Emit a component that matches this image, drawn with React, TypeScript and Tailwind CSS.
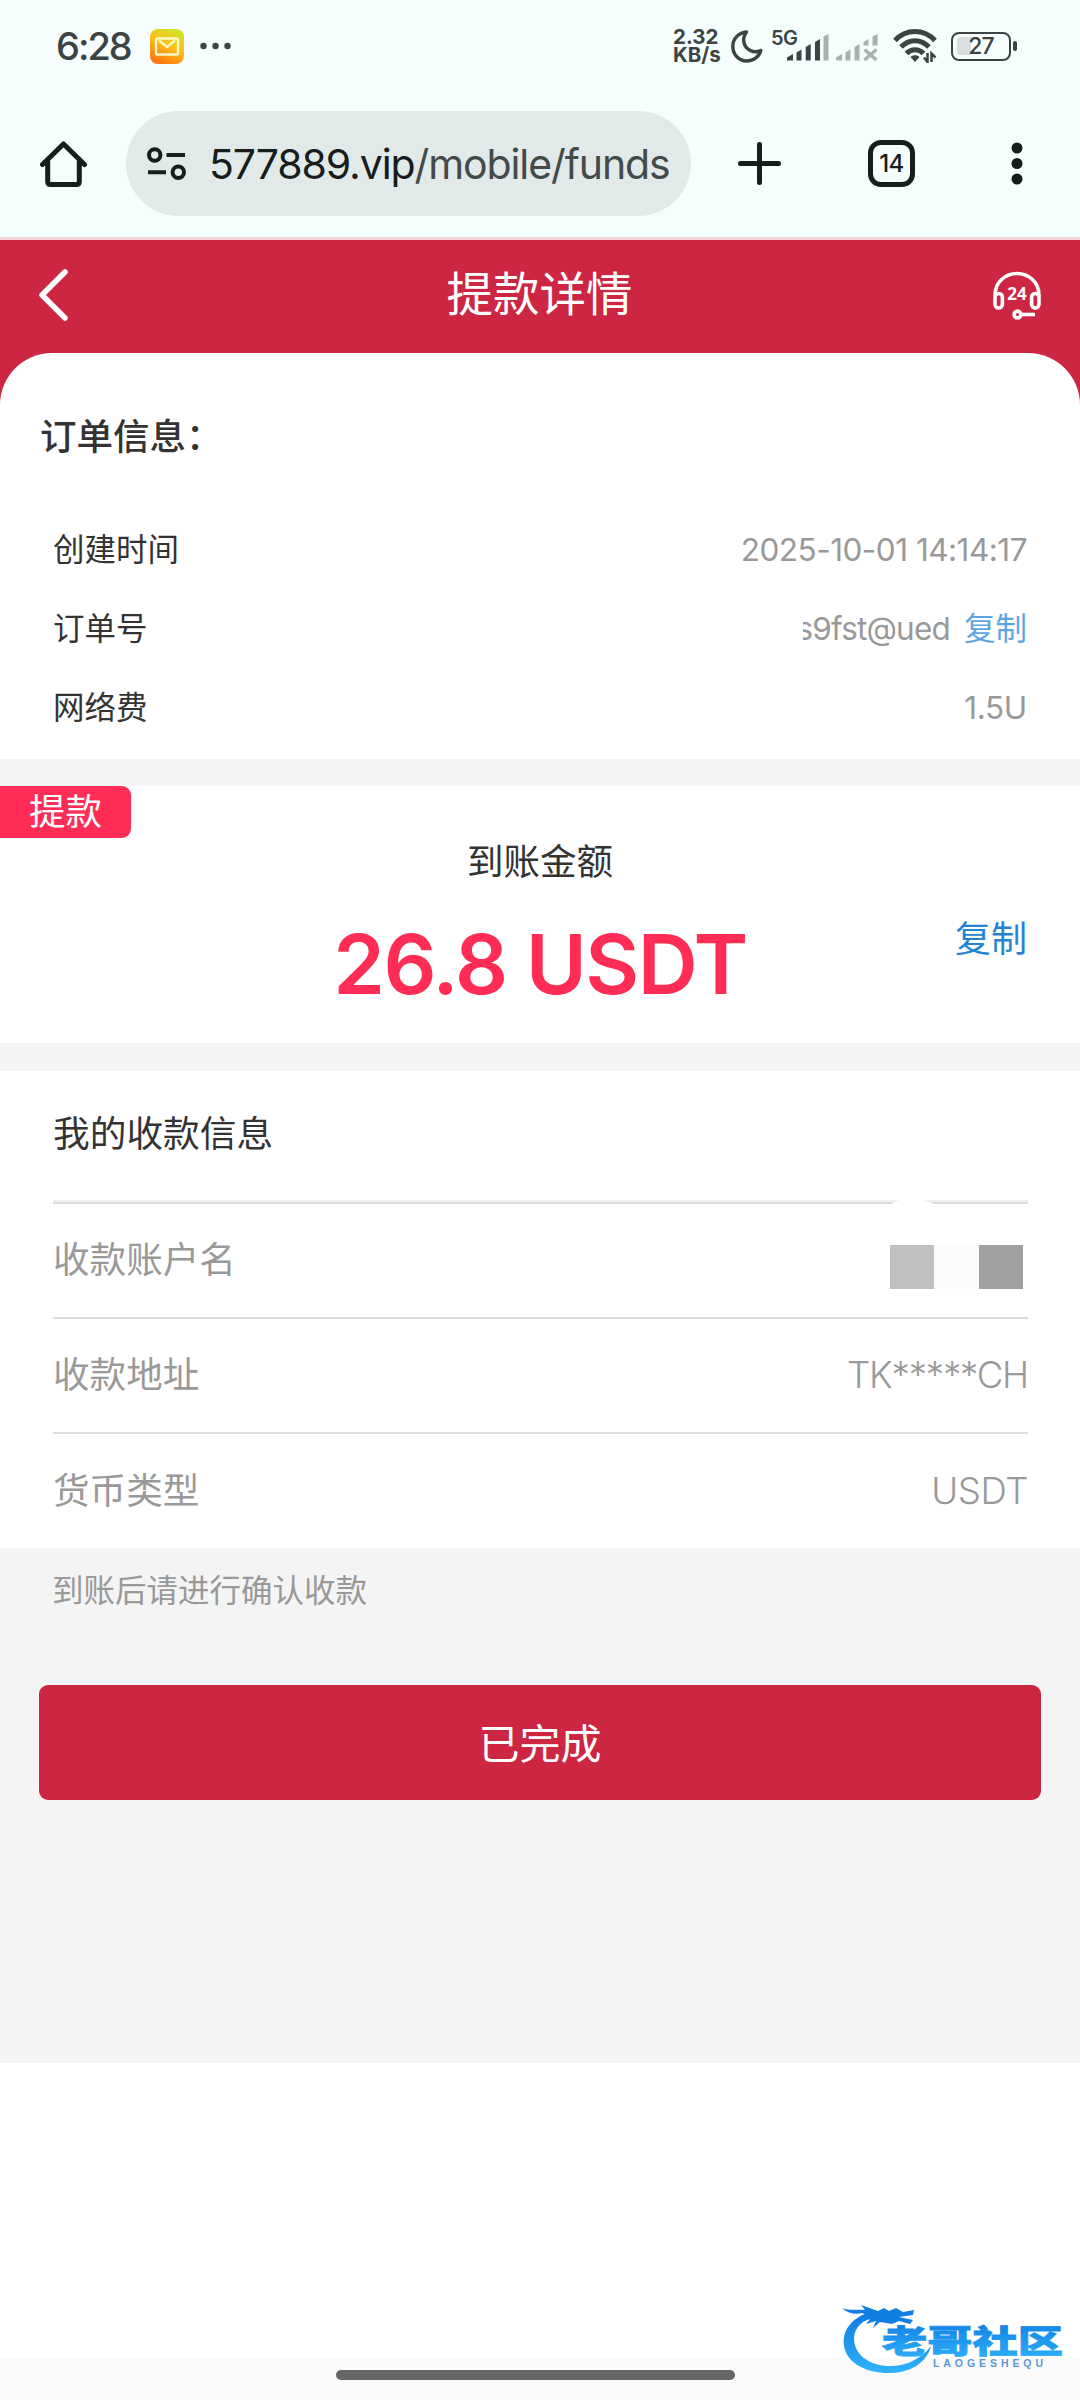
import type { ReactNode } from "react";

const orderRows: { label: string; value: ReactNode }[] = [
  {
    label: "创建时间",
    value: <span className="tracking-[-0.5px]">2025-10-01 14:14:17</span>,
  },
  {
    label: "订单号",
    value: (
      <>
        <span className="flex w-[147px] justify-end overflow-hidden whitespace-nowrap leading-[44px] tracking-[-0.8px]">
          s9fst@ued
        </span>
        <button className="ml-[14px] text-[31.5px] leading-none text-[#5da5e2]">
          复制
        </button>
      </>
    ),
  },
  { label: "网络费", value: <span className="tracking-[-0.3px]">1.5U</span> },
];

const payeeRows: { label: string; value: ReactNode }[] = [
  { label: "收款账户名", value: <MaskedName /> },
  {
    label: "收款地址",
    value: <span className="tracking-[-1.2px]">TK*****CH</span>,
  },
  {
    label: "货币类型",
    value: <span className="tracking-[-0.4px]">USDT</span>,
  },
];

export default function App() {
  return (
    <div className="relative flex h-[2400px] w-[1080px] flex-col overflow-hidden bg-white font-['Inter','Noto_Sans_CJK_SC',sans-serif] text-[#333333]">
      <StatusBar />
      <BrowserBar />

      <div className="bg-[#cd2642]">
        <header className="flex h-[113px] items-center justify-between pb-[4px] pl-[38px] pr-[39px]">
          <svg width="48" height="54" viewBox="0 0 48 54" fill="none">
            <path
              d="M27 4 4 27 27 50"
              stroke="#fff"
              strokeWidth="5.5"
              strokeLinecap="round"
              strokeLinejoin="round"
            />
          </svg>
          <h1 className="text-[46.5px] leading-none text-white">提款详情</h1>
          <HeadsetIcon />
        </header>

        <section className="h-[406px] rounded-t-[52px] bg-white pt-[60px]">
          <h2 className="pl-[40px] text-[36.5px] font-medium leading-[48px]">
            订单信息：
          </h2>
          <div className="mt-[49px]">
            {orderRows.map((row) => (
              <div
                key={row.label}
                className="flex h-[79px] items-center justify-between px-[53px]"
              >
                <span className="text-[31.5px] leading-none">{row.label}</span>
                <span className="flex items-center text-[31.5px] leading-none text-[#999999]">
                  {row.value}
                </span>
              </div>
            ))}
          </div>
        </section>
      </div>

      <div className="h-[27px] bg-[#f4f4f4]" />

      <section className="relative flex h-[257px] flex-col items-center pt-[52px]">
        <span className="absolute left-0 top-0 flex h-[52px] w-[131px] items-center rounded-r-[9px] bg-[#ff2d55] pl-[29px] text-[36.5px] leading-none text-white">
          提款
        </span>
        <p className="text-[36.5px] leading-[48px]">到账金额</p>
        <p className="mt-[28px] text-[83px] font-semibold leading-[100px] tracking-[-1.6px] text-[#ff2d55]">
          26.8 USDT
        </p>
        <button className="absolute right-[53px] top-[135px] text-[36px] leading-none text-[#2384d4]">
          复制
        </button>
      </section>

      <div className="h-[28px] bg-[#f4f4f4]" />

      <section className="h-[477px] pl-[53px] pr-[52px]">
        <div className="relative flex h-[133px] items-center border-b-2 border-[#dddddd] shadow-[inset_0_-2px_0_#f0f0f0]">
          <h2 className="pb-[4px] text-[36.7px] leading-none">我的收款信息</h2>
          <svg
            className="absolute bottom-[-3px] right-[91px]"
            width="48"
            height="6"
            viewBox="0 0 48 6"
          >
            <path d="M0 6 12 0H32L48 6Z" fill="#fff" />
          </svg>
        </div>
        {payeeRows.map((row) => (
          <div
            key={row.label}
            className="flex h-[115px] items-center justify-between border-b-2 border-[#dddddd] pb-px text-[36.6px] leading-none text-[#999999] last:border-b-0"
          >
            <span>{row.label}</span>
            <span className="font-light">{row.value}</span>
          </div>
        ))}
      </section>

      <section className="h-[515px] bg-[#f4f4f4] px-[39px] pt-[19px]">
        <p className="pl-[13px] text-[31.5px] leading-[48px] text-[#999999]">
          到账后请进行确认收款
        </p>
        <button className="mt-[70px] flex h-[115px] w-full items-center justify-center rounded-[9px] bg-[#cd2642] pt-[3px] text-[41px] leading-none text-white">
          已完成
        </button>
      </section>

      <div className="h-[295px]" />
      <footer className="flex h-[42px] bg-[#fafafa] pl-[336px] pt-[12px]">
        <div className="h-[10px] w-[399px] rounded-full bg-[#666666]" />
      </footer>

      <Watermark />
    </div>
  );
}

function StatusBar() {
  return (
    <div className="flex h-[92px] items-center justify-between bg-[#f5fefd] pl-[56px] pr-[63px] text-[#3b4443]">
      <div className="flex items-center">
        <span className="w-[94px] text-[38px] font-medium leading-none tracking-[-2px]">
          6:28
        </span>
        <svg width="34" height="35" viewBox="0 0 34 35" fill="none">
          <defs>
            <linearGradient id="mail" x1="0.75" y1="0" x2="0.3" y2="1">
              <stop offset="0" stopColor="#cfe52a" />
              <stop offset="0.45" stopColor="#fbc016" />
              <stop offset="1" stopColor="#fb7410" />
            </linearGradient>
          </defs>
          <rect width="34" height="35" rx="8" fill="url(#mail)" />
          <rect x="6" y="9.5" width="22" height="16" rx="1.5" stroke="#fff8c8" strokeWidth="2.4" />
          <path d="m9 11.5 8 6.5 8-6.5" stroke="#fff8c8" strokeWidth="2.4" />
        </svg>
        <svg className="ml-[16px]" width="32" height="8" viewBox="0 0 32 8" fill="currentColor">
          <circle cx="3.5" cy="4" r="3.2" />
          <circle cx="15.5" cy="4" r="3.2" />
          <circle cx="27.5" cy="4" r="3.2" />
        </svg>
      </div>

      <div className="flex items-center">
        <div className="w-[58px] text-[20.5px] font-bold leading-[18.5px]">
          <div>2.32</div>
          <div>KB/s</div>
        </div>
        <svg width="32" height="33" viewBox="0 0 32 33" fill="none">
          <path
            d="M15.5 2C8 2.5 1.8 8.5 1.8 16.5c0 8 6.2 14.5 14 14.5 6.5 0 12.2-4 14-10.500-3 1.500-7 1.800-10.500 0C12.500 17 10.500 9 15.500 2Z"
            stroke="currentColor"
            strokeWidth="3.4"
            strokeLinejoin="round"
          />
        </svg>
        <span className="ml-[8px] h-[33px] w-[16px] whitespace-nowrap text-[20px] font-semibold leading-[17px] tracking-[-0.5px]">
          5G
        </span>
        <SignalIcons />
        <WifiIcon />
        <div className="ml-[14px] flex items-center">
          <div className="relative flex h-[29px] w-[60px] items-center justify-center rounded-[8px] border-[2.5px] border-current">
            <div className="absolute left-[4px] top-[3px] h-[18px] w-[14px] rounded-l-[4px] bg-[#d8dfde]" />
            <span className="relative text-[23px] font-medium leading-none tracking-[-1px]">
              27
            </span>
          </div>
          <div className="ml-[2px] h-[10px] w-[4px] rounded-[2px] bg-current" />
        </div>
      </div>
    </div>
  );
}

function SignalIcons() {
  return (
    <svg width="92" height="33" viewBox="0 0 92 33" fill="currentColor">
      <path d="M0 27.5 6 24v6.5H0ZM9.5 22.5l5-3v11h-5ZM18.7 17l5-3v16.5h-5ZM28 12l5-3v21.5h-5Z" />
      <path
        d="M36.5 6.5 41.5 4v26.5h-5ZM49 27.5 55 24v6.5h-6ZM58.5 22.5l5-3v11h-5ZM67.5 17l5-3v16.5h-5ZM76.5 12l5-3v6.5h-5ZM85.5 6.5 90.5 4v11.5h-5Z"
        fill="#a9b1b0"
      />
      <path d="m77.5 19.5 12 10.5M89.5 19.5l-12 10.5" stroke="#a9b1b0" strokeWidth="3.5" />
    </svg>
  );
}

function WifiIcon() {
  return (
    <svg className="ml-[14px]" width="44" height="34" viewBox="0 0 44 34" fill="none">
      <g stroke="currentColor" strokeWidth="5">
        <path d="M2 11.5C13-.5 31-.5 42 11.5" />
        <path d="M8 18c8-8.5 20-8.5 28 0" />
        <path d="M13.5 24.5c4.500-5 12.500-5 17 0" />
      </g>
      <path d="M17.5 28c2.500-2.500 6.500-2.500 9 0L22 33Z" fill="currentColor" />
      <path d="M34.5 24v9l-3.500-4.500M38.500 33v-8.500l4 4" stroke="currentColor" strokeWidth="2.5" />
    </svg>
  );
}

function BrowserBar() {
  return (
    <div className="flex h-[148px] items-start border-b-[3px] border-[#f2d3da] bg-[#f5fefd] pl-[40px] pt-[19px] text-[#161d1c]">
      <svg className="mt-[29px]" width="48" height="48" viewBox="0 0 48 48" fill="none">
        <path
          d="M2.5 24.5 23.5 4l21 20.5M7.7 21v20.5q0 3 3 3h25.6q3 0 3-3V21"
          stroke="currentColor"
          strokeWidth="5"
          strokeLinecap="round"
          strokeLinejoin="round"
        />
      </svg>

      <div className="ml-[38px] flex h-[105px] w-[565px] items-center rounded-full bg-[#e1eae8] pl-[21px]">
        <svg width="39" height="34" viewBox="0 0 39 34" fill="none" stroke="currentColor" strokeWidth="4">
          <circle cx="7.7" cy="8" r="5.7" />
          <circle cx="31.3" cy="25.3" r="5.7" />
          <path d="M19.5 8h18.5M1 25.3h18" />
        </svg>
        <span className="ml-[23px] whitespace-nowrap pt-px text-[41px] leading-none tracking-[-1.1px]">
          577889.vip<span className="text-[#434b4a]">/mobile/funds</span>
        </span>
      </div>

      <svg className="ml-[47px] mt-[31px]" width="43" height="43" viewBox="0 0 43 43">
        <path
          d="M21.5 2.5v38M2.5 21.5h38"
          stroke="currentColor"
          strokeWidth="5"
          strokeLinecap="round"
        />
      </svg>
      <div className="ml-[87px] mt-[29px] flex size-[47px] items-center justify-center rounded-[13px] border-[5px] border-current text-[24px] font-medium leading-none tracking-[-0.5px]">
        14
      </div>
      <svg className="ml-[96px] mt-[31px]" width="12" height="43" viewBox="0 0 12 43" fill="currentColor">
        <circle cx="6" cy="6" r="5.5" />
        <circle cx="6" cy="21.5" r="5.5" />
        <circle cx="6" cy="37" r="5.5" />
      </svg>
    </div>
  );
}

function HeadsetIcon() {
  return (
    <svg width="48" height="50" viewBox="0 0 48 50" fill="none" stroke="#fff" strokeWidth="3.6">
      <path d="M2.2 26v-2a21.8 20.5 0 0 1 43.6 0v2" />
      <rect x="2" y="23.5" width="7.4" height="14.5" rx="3.7" />
      <rect x="38.6" y="23.5" width="7.4" height="14.5" rx="3.7" />
      <circle cx="24.5" cy="44.5" r="3.4" />
      <path d="M28.5 44.5h13.5" />
      <text
        x="24"
        y="30"
        fill="#fff"
        stroke="none"
        textAnchor="middle"
        fontFamily="Open Sans, sans-serif"
        fontSize="17"
        fontWeight="700"
      >
        24
      </text>
    </svg>
  );
}

function MaskedName() {
  return (
    <span className="mr-[5px] mt-[14px] flex">
      <span className="h-[44px] w-[44px] bg-[#bfbfbf]" />
      <span className="h-[44px] w-[45px] bg-[#fbfbfb]" />
      <span className="h-[44px] w-[44px] bg-[#a1a1a1]" />
    </span>
  );
}

function Watermark() {
  return (
    <svg
      className="absolute bottom-[20px] right-[10px]"
      width="236"
      height="84"
      viewBox="834 2296 236 84"
    >
      <defs>
        <linearGradient id="ring" x1="0" y1="0" x2="0" y2="1">
          <stop offset="0" stopColor="#0d7be0" />
          <stop offset="1" stopColor="#2fb2fb" />
        </linearGradient>
      </defs>
      <path
        d="M871 2312C852 2317 842 2330 844 2346C847 2364 868 2374 892 2373C912 2372 927 2362 931 2346C920 2360 904 2367 888 2366C868 2365 854 2354 854 2338C855 2326 863 2319 877 2318Z"
        fill="url(#ring)"
      />
      <path
        d="M842 2308C850 2311 858 2309 865 2310L861 2305L878 2311L884 2308L889 2311L896 2308L903 2312L914 2310L913 2315L899 2317L913 2320L910 2324L899 2321L892 2324L880 2322L873 2328L876 2321L866 2324L872 2317L862 2313C855 2315 847 2313 842 2308Z"
        fill="#117fe2"
      />
      <text
        x="882"
        y="2353"
        fill="url(#ring)"
        stroke="url(#ring)"
        strokeWidth="0.8"
        fontFamily="Noto Sans CJK SC, sans-serif"
        fontSize="32"
        fontWeight="900"
        textLength="181"
        lengthAdjust="spacingAndGlyphs"
      >
        老哥社区
      </text>
      <text
        x="933"
        y="2366.5"
        fill="#5b97d2"
        fontFamily="Liberation Sans, sans-serif"
        fontSize="10.5"
        fontWeight="700"
        textLength="110"
      >
        LAOGESHEQU
      </text>
    </svg>
  );
}
